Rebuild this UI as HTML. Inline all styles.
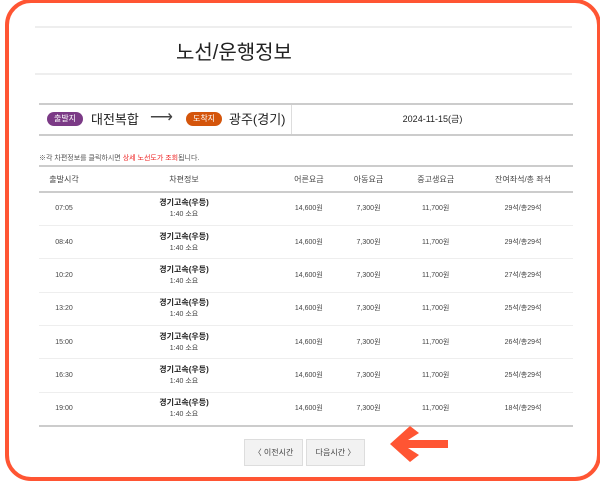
<!DOCTYPE html>
<html><head><meta charset="utf-8"><style>
*{margin:0;padding:0;box-sizing:border-box}
body{width:600px;height:483px;background:#fff;position:relative;overflow:hidden;font-family:"Liberation Sans","Noto Sans CJK KR",sans-serif;color:#333}
.frame{position:absolute;left:5px;top:-1px;width:596px;height:482px;border:4px solid #ff5533;border-radius:26px}
.abs{position:absolute}
.hl{position:absolute;height:2px;background:#eee}
.badge{position:absolute;height:14px;border-radius:7px;color:#fff;font-size:8px;line-height:14px;text-align:center;width:36px}
table{position:absolute;left:39px;top:165px;width:534px;border-collapse:collapse;font-size:7px;color:#444}
th{height:26px;font-weight:normal;font-size:8px;border-top:2px solid #ccc;border-bottom:2px solid #ccc}
td{height:33.4px;text-align:center;border-bottom:1px solid #eee;line-height:11px}
td b{font-size:8px;color:#222}
.btn{position:absolute;top:439px;height:27px;width:59px;border:1px solid #ddd;background:#f2f2f2;font-size:8px;text-align:center;line-height:25px;color:#444}
</style></head><body>
<div class="frame"></div>
<div class="hl" style="left:35px;top:26px;width:537px"></div>
<div class="hl" style="left:35px;top:73px;width:537px"></div>
<div class="abs" style="left:176px;top:36px;font-size:20px;color:#222">노선/운행정보</div>
<div class="abs" style="left:39px;top:103px;width:534px;height:2px;background:#ccc"></div>
<div class="abs" style="left:39px;top:134px;width:534px;height:2px;background:#ccc"></div>
<div class="abs" style="left:291px;top:105px;width:1px;height:29px;background:#ddd"></div>
<div class="badge" style="left:47px;top:112px;background:#7b3a86">출발지</div>
<div class="abs" style="left:91px;top:109px;font-size:13px;color:#222">대전복합</div>
<div class="abs" style="left:150px;top:107px;font-size:16px;color:#444">⟶</div>
<div class="badge" style="left:186px;top:112px;background:#d4550b">도착지</div>
<div class="abs" style="left:229px;top:109px;font-size:13px;color:#222">광주(경기)</div>
<div class="abs" style="left:292px;top:112px;width:281px;text-align:center;font-size:9px;color:#222">2024-11-15(금)</div>
<div class="abs" style="left:39px;top:153px;font-size:7px;color:#555">※각 차편정보를 클릭하시면 <span style="color:#e22">상세 노선도가 조회</span>됩니다.</div>
<table>
<tr><th style="width:50px">출발시각</th><th style="width:190px">차편정보</th><th>어른요금</th><th>아동요금</th><th>중고생요금</th><th style="width:100px">잔여좌석/총 좌석</th></tr>
<tr><td>07:05</td><td><b>경기고속(우등)</b><br>1:40 소요</td><td>14,600원</td><td>7,300원</td><td>11,700원</td><td>29석/총29석</td></tr>
<tr><td>08:40</td><td><b>경기고속(우등)</b><br>1:40 소요</td><td>14,600원</td><td>7,300원</td><td>11,700원</td><td>29석/총29석</td></tr>
<tr><td>10:20</td><td><b>경기고속(우등)</b><br>1:40 소요</td><td>14,600원</td><td>7,300원</td><td>11,700원</td><td>27석/총29석</td></tr>
<tr><td>13:20</td><td><b>경기고속(우등)</b><br>1:40 소요</td><td>14,600원</td><td>7,300원</td><td>11,700원</td><td>25석/총29석</td></tr>
<tr><td>15:00</td><td><b>경기고속(우등)</b><br>1:40 소요</td><td>14,600원</td><td>7,300원</td><td>11,700원</td><td>26석/총29석</td></tr>
<tr><td>16:30</td><td><b>경기고속(우등)</b><br>1:40 소요</td><td>14,600원</td><td>7,300원</td><td>11,700원</td><td>25석/총29석</td></tr>
<tr><td style="border-bottom:2px solid #ccc">19:00</td><td style="border-bottom:2px solid #ccc"><b>경기고속(우등)</b><br>1:40 소요</td><td style="border-bottom:2px solid #ccc">14,600원</td><td style="border-bottom:2px solid #ccc">7,300원</td><td style="border-bottom:2px solid #ccc">11,700원</td><td style="border-bottom:2px solid #ccc">18석/총29석</td></tr>
</table>
<div class="btn" style="left:244px">〈 이전시간</div>
<div class="btn" style="left:306px">다음시간 〉</div>
<svg class="abs" style="left:388px;top:424px" width="62" height="40" viewBox="0 0 62 40"><polygon points="2,20 22,2 31,9 20,16 60,16 60,24 20,24 31,31 22,38" fill="#ff5533"/></svg>
</body></html>
